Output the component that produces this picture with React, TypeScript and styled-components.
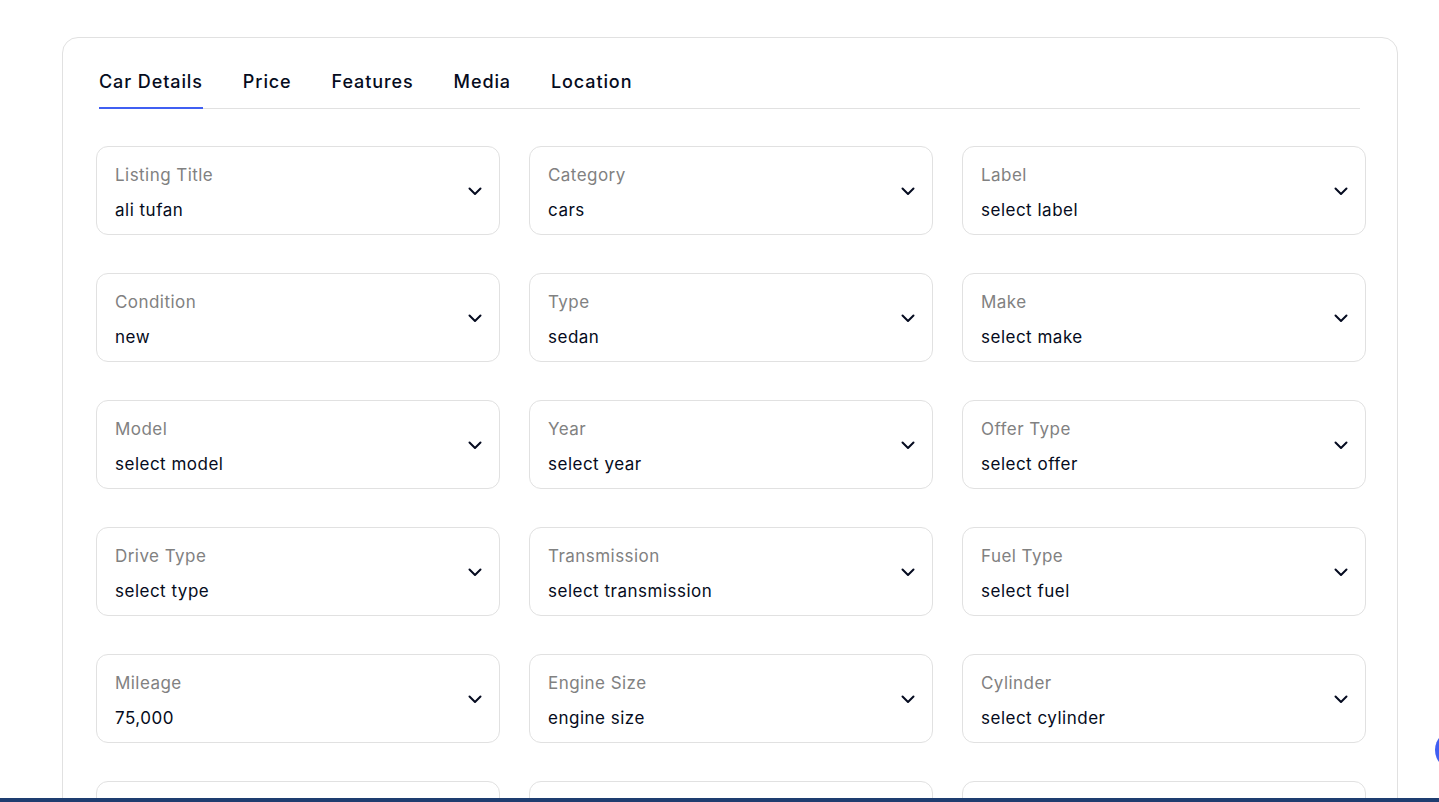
import { createGlobalStyle, styled } from "styled-components";

const GlobalStyle = createGlobalStyle`
  html, body {
    margin: 0;
    padding: 0;
    background: #ffffff;
  }
  body {
    font-family: Inter, "DejaVu Sans", sans-serif;
    color: #050b20;
  }
`;

const tabs = ["Car Details", "Price", "Features", "Media", "Location"];

const fields = [
  { label: "Listing Title", value: "ali tufan" },
  { label: "Category", value: "cars" },
  { label: "Label", value: "select label" },
  { label: "Condition", value: "new" },
  { label: "Type", value: "sedan" },
  { label: "Make", value: "select make" },
  { label: "Model", value: "select model" },
  { label: "Year", value: "select year" },
  { label: "Offer Type", value: "select offer" },
  { label: "Drive Type", value: "select type" },
  { label: "Transmission", value: "select transmission" },
  { label: "Fuel Type", value: "select fuel" },
  { label: "Mileage", value: "75,000" },
  { label: "Engine Size", value: "engine size" },
  { label: "Cylinder", value: "select cylinder" },
  { label: "Color", value: "select color" },
  { label: "Door", value: "select door" },
  { label: "VIN", value: "vin" },
];

function Chevron() {
  return (
    <ChevronSvg width="14" height="9" viewBox="0 0 14 9" fill="none">
      <path
        d="M1.5 1.5l5.5 5.5 5.5-5.5"
        stroke="#050b20"
        strokeWidth="2"
        strokeLinecap="round"
        strokeLinejoin="round"
      />
    </ChevronSvg>
  );
}

export default function App() {
  return (
    <>
      <GlobalStyle />
      <Page>
        <Card>
          <TabBar>
            {tabs.map((t, i) => (
              <Tab key={t} active={i === 0}>
                {t}
              </Tab>
            ))}
          </TabBar>
          <Grid>
            {fields.map((f) => (
              <Field key={f.label}>
                <FieldText>
                  <Label>{f.label}</Label>
                  <Value>{f.value}</Value>
                </FieldText>
                <Chevron />
              </Field>
            ))}
          </Grid>
        </Card>
        <ScrollTop />
        <BottomBar />
      </Page>
    </>
  );
}

const Page = styled.div`
  position: relative;
  height: 802px;
  overflow: hidden;
  padding: 37px 41px 0 62px;
  box-sizing: border-box;
`;

const Card = styled.div`
  border: 1px solid #e1e1e1;
  border-radius: 16px;
  padding: 31px 31px 40px 33px;
  box-sizing: border-box;
`;

const TabBar = styled.div`
  display: flex;
  gap: 40px;
  margin: 0 6px 0 3px;
  border-bottom: 1px solid #e1e1e1;
`;

const Tab = styled.div<{ active: boolean }>`
  font-size: 18px;
  font-weight: 500;
  line-height: 24px;
  letter-spacing: 0.9px;
  padding-top: 1px;
  padding-bottom: 13px;
  margin-bottom: -1px;
  color: #050b20;
  border-bottom: 2px solid ${(p) => (p.active ? "#405ff2" : "transparent")};
`;

const Grid = styled.div`
  display: grid;
  grid-template-columns: repeat(3, 1fr);
  column-gap: 29px;
  row-gap: 38px;
  margin-top: 37px;
`;

const Field = styled.div`
  height: 89px;
  box-sizing: border-box;
  border: 1px solid #e1e1e1;
  border-radius: 12px;
  padding: 0 17px 0 18px;
  display: flex;
  align-items: center;
  justify-content: space-between;
`;

const FieldText = styled.div`
  display: flex;
  flex-direction: column;
  gap: 11px;
  padding-top: 3px;
`;

const ChevronSvg = styled.svg`
  flex-shrink: 0;
  margin-top: 2px;
`;

const Label = styled.div`
  font-size: 17px;
  line-height: 24px;
  letter-spacing: 0.45px;
  color: #818181;
`;

const Value = styled.div`
  font-size: 17px;
  line-height: 24px;
  letter-spacing: 0.5px;
  color: #050b20;
`;

const ScrollTop = styled.div`
  position: absolute;
  left: 1435px;
  top: 730px;
  width: 40px;
  height: 40px;
  border-radius: 50%;
  background: #405ff2;
`;

const BottomBar = styled.div`
  position: absolute;
  left: 0;
  right: 0;
  bottom: 0;
  height: 4px;
  background: #1e3d70;
`;
